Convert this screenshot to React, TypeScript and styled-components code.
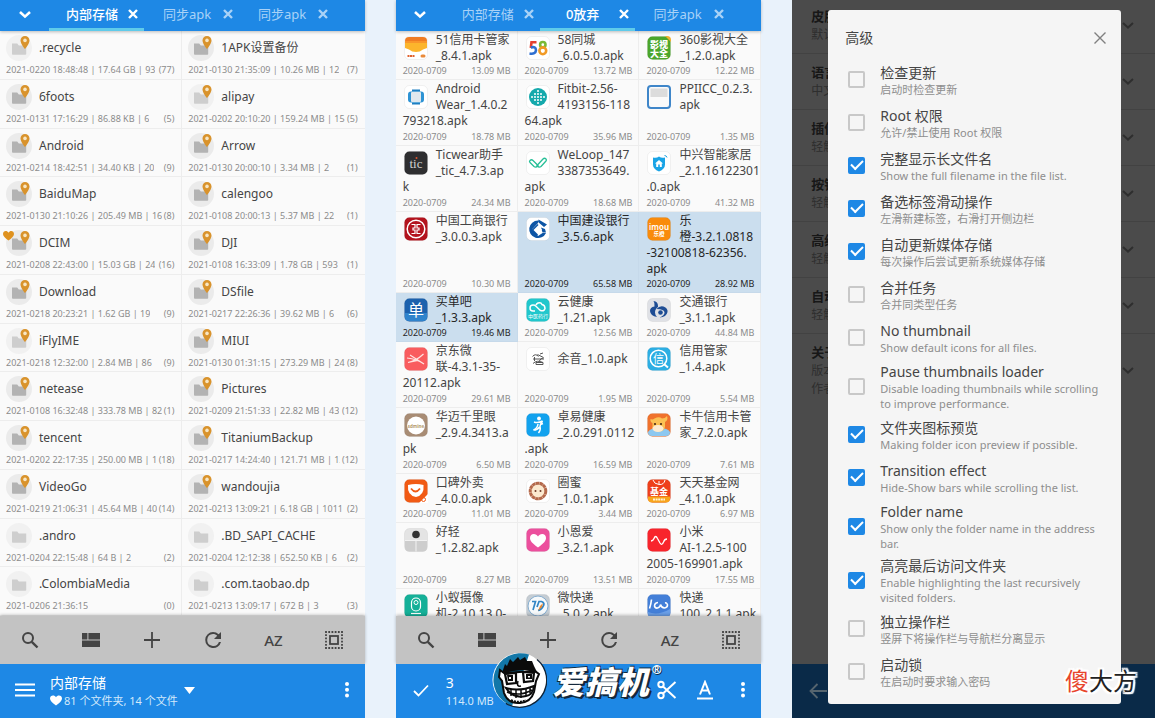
import React from "react";
import styled, { createGlobalStyle, css } from "styled-components";

const Global = createGlobalStyle`
  *, *::before, *::after { box-sizing: border-box; }
  body {
    margin: 0;
    background: #e9f2fb;
    font-family: "Noto Sans", "Noto Sans CJK SC", sans-serif;
    color: #454545;
  }
  button { font: inherit; color: inherit; background: none; border: 0; padding: 0; cursor: pointer; }
  ul { list-style: none; margin: 0; padding: 0; }
  svg { display: block; flex: none; }
`;

const Screens = styled.main`
  display: grid;
  grid-template-columns: minmax(0, 365fr) minmax(0, 366fr) minmax(0, 363fr);
  column-gap: 31px;
  height: 100vh;
  overflow: hidden;
`;

const Phone = styled.section`
  position: relative;
  display: flex;
  flex-direction: column;
  min-width: 0;
  min-height: 0;
  background: #fafafa;
`;

/* ---------- tabs ---------- */

const TabBar = styled.nav`
  display: flex;
  flex: none;
  height: 31px;
  background: #1e88e5;
  color: #fff;
  box-shadow: 0 1px 3px rgba(0, 0, 0, 0.25);
  z-index: 1;
`;

const TabMenuButton = styled.button`
  display: flex;
  align-items: center;
  justify-content: center;
  width: 49px;
  padding-bottom: 2px;
`;

const Tab = styled.div<{ $active?: boolean }>`
  display: flex;
  align-items: center;
  width: 95px;
  padding: 0 5px 0 8px;
  border-bottom: 3px solid ${(p) => (p.$active ? "#5fcbea" : "transparent")};
  color: ${(p) => (p.$active ? "#fff" : "#a9d2f7")};
  font-weight: ${(p) => (p.$active ? 500 : 400)};
`;

const TabLabel = styled.button`
  flex: 1;
  font-size: 13px;
  line-height: 20px;
  white-space: nowrap;
`;

const TabClose = styled.button`
  width: 12px;
  height: 12px;
`;

/* ---------- folder list ---------- */

const FolderGrid = styled.ul`
  flex: 1;
  min-height: 0;
  display: grid;
  grid-template-columns: repeat(2, minmax(0, 1fr));
  grid-auto-rows: minmax(0, 1fr);
`;

const FolderCell = styled.li`
  display: flex;
  flex-direction: column;
  padding: 4px 7px 0 6px;
  border-bottom: 1px solid #ededed;
  overflow: hidden;
  &:nth-child(odd) { border-right: 1px solid #ededed; }
`;

const FolderTop = styled.div`
  display: flex;
  align-items: center;
  gap: 7px;
`;

const FolderName = styled.span`
  font-size: 12px;
  line-height: 24px;
  white-space: nowrap;
`;

const FolderMeta = styled.div`
  display: flex;
  justify-content: space-between;
  gap: 2px;
  font-size: 9px;
  line-height: 17px;
  color: #8c8c8c;
  white-space: nowrap;
`;

const Clip = styled.span`
  overflow: hidden;
`;

/* ---------- apk list ---------- */

const ApkList = styled.div`
  flex: 1;
  min-height: 0;
  overflow: hidden;
`;

const rowHeights: Record<number, number> = { 2: 49, 3: 66, 4: 81 };

const ApkRow = styled.ul<{ $lines: number }>`
  display: grid;
  grid-template-columns: repeat(3, minmax(0, 1fr));
  min-height: ${(p) => rowHeights[p.$lines]}px;
`;

const ApkCell = styled.li<{ $selected?: boolean }>`
  display: flex;
  flex-direction: column;
  justify-content: space-between;
  padding: 1px 6px 1px 7px;
  border: solid #ededed;
  border-width: 0 1px 1px 0;
  color: #454545;
  ${(p) =>
    p.$selected &&
    css`
      background: #cbdeee;
      border-color: #c6d9ea;
      color: #262626;
    `}
`;

const ApkName = styled.div`
  font-size: 12px;
  line-height: 16px;
  white-space: pre;
`;

const ApkHead = styled.div`
  display: flex;
  align-items: center;
  gap: 8px;
  min-height: 32px;
  padding-left: 1px;
`;

const ApkMeta = styled.div<{ $selected?: boolean }>`
  display: flex;
  justify-content: space-between;
  font-size: 9px;
  line-height: 14px;
  color: ${(p) => (p.$selected ? "#262626" : "#8c8c8c")};
`;

/* ---------- bars ---------- */

const ToolBar = styled.div`
  display: grid;
  grid-template-columns: repeat(6, 1fr);
  flex: none;
  height: 48px;
  background: #c3c3c3;
  color: #444;
  box-shadow: 0 -1px 3px rgba(0, 0, 0, 0.25);
  z-index: 1;
`;

const ToolButton = styled.button`
  display: flex;
  align-items: center;
  justify-content: center;
  font-size: 15px;
  font-weight: 500;
`;

const AddressBar = styled.footer`
  position: relative;
  display: flex;
  align-items: center;
  flex: none;
  height: 54px;
  padding: 0 6px 2px 13px;
  background: #1e88e5;
  color: #fff;
  z-index: 1;
`;

const BarButton = styled.button`
  display: flex;
  align-items: center;
  justify-content: center;
  width: 24px;
  height: 40px;
`;

const Location = styled.div`
  display: flex;
  flex-direction: column;
  padding-left: 13px;
`;

const LocationTitle = styled.span`
  font-size: 14px;
  line-height: 20px;
`;

const LocationSub = styled.span`
  display: flex;
  align-items: center;
  gap: 2px;
  font-size: 11px;
  line-height: 15px;
  color: #d3e8fb;
`;

const Spacer = styled.span`
  flex: 1;
`;

const ActionGroup = styled.div`
  display: flex;
  gap: 14px;
`;

const Brand = styled.div`
  position: absolute;
  left: 96px;
  top: -12px;
  display: flex;
  align-items: center;
  gap: 6px;
`;

const BrandName = styled.strong`
  font-family: "Noto Sans CJK SC", sans-serif;
  font-size: 32px;
  line-height: 40px;
  font-weight: 900;
  font-style: italic;
  color: #fff;
  text-shadow: 2px 2px 0 #14283c, 1px -1px 0 #14283c, -1px 1px 0 #14283c;
`;

const BrandMark = styled.span`
  align-self: flex-start;
  margin: 8px 0 0 -3px;
  font-size: 12px;
  line-height: 20px;
  font-weight: 700;
  text-shadow: 1px 1px 0 #14283c;
`;

/* ---------- settings ---------- */

const SettingsPhone = styled(Phone)`
  background: #4b4b4b;
`;

const SettingsList = styled.ul`
  flex: 1;
  min-height: 0;
`;

const SettingsItem = styled.li`
  display: flex;
  align-items: center;
  justify-content: space-between;
  padding: 9px 21px 9px 19px;
  border-bottom: 1px solid #424242;
  color: #2e2e2e;
  &:first-child { padding-top: 7px; }
  &:last-child { border-bottom: 0; }
`;

const SettingsTitle = styled.div`
  font-size: 13px;
  line-height: 19px;
  font-weight: 600;
  color: #171717;
`;

const SettingsSub = styled.div`
  font-size: 12px;
  line-height: 18px;
  white-space: pre-line;
`;

const BackBar = styled.footer`
  display: flex;
  align-items: center;
  flex: none;
  height: 54px;
  padding-left: 14px;
  background: #0a2a48;
  color: #56656f;
`;

const Dialog = styled.div`
  position: absolute;
  top: 10px;
  left: 36px;
  right: 34px;
  padding-bottom: 11px;
  background: #f5f5f5;
  border-radius: 3px;
  z-index: 2;
`;

const DialogHeader = styled.header`
  display: flex;
  align-items: center;
  justify-content: space-between;
  height: 48px;
  padding: 7px 15px 0 17px;
`;

const DialogTitle = styled.h2`
  margin: 0;
  font-size: 14px;
  line-height: 20px;
  font-weight: 400;
`;

const Option = styled.label`
  display: flex;
  align-items: center;
  gap: 15px;
  min-height: 43px;
  padding: 0 14px 0 20px;
  cursor: pointer;
`;

const OptionText = styled.span`
  display: flex;
  flex-direction: column;
  padding: 4px 0 2px;
`;

const OptionTitle = styled.span`
  font-size: 14px;
  line-height: 18px;
`;

const OptionSub = styled.span`
  font-size: 11px;
  line-height: 15px;
  color: #8e8e8e;
`;

const CheckBox = styled.input`
  appearance: none;
  display: grid;
  place-items: center;
  flex: none;
  width: 17px;
  height: 17px;
  margin: 0;
  border: 2px solid #c8c8c8;
  border-radius: 2px;
  &:checked {
    background: #1e88e5;
    border-color: #1e88e5;
  }
  &:checked::after {
    content: "";
    width: 12px;
    height: 7px;
    margin-top: -4px;
    border: solid #fff;
    border-width: 0 0 2px 2px;
    transform: rotate(-45deg);
  }
`;

const Watermark = styled.div`
  position: absolute;
  right: 18px;
  bottom: 20px;
  font-family: "Noto Sans CJK SC", sans-serif;
  font-size: 24px;
  line-height: 36px;
  color: #222;
  text-shadow: 2px 0 1px #fff, -2px 0 1px #fff, 0 2px 1px #fff, 0 -2px 1px #fff,
    2px 2px 1px #fff, -2px 2px 1px #fff, 2px -2px 1px #fff, -2px -2px 1px #fff;
  z-index: 3;
`;

const WatermarkRed = styled.span`
  color: #e8452c;
`;

/* ---------- small drawings ---------- */

const Chevron = ({ size = 12, width = 2.6 }: { size?: number; width?: number }) => (
  <svg width={size} height={size} viewBox="0 0 12 12" fill="none" stroke="currentColor" strokeWidth={width}>
    <path d="M1 3l5 4.6L11 3" />
  </svg>
);

const Cross = ({ size = 12, width = 2.4 }: { size?: number; width?: number }) => (
  <svg width={size} height={size} viewBox="0 0 12 12" fill="none" stroke="currentColor" strokeWidth={width}>
    <path d="M2 2l8 8M10 2l-8 8" />
  </svg>
);

const Dots = () => (
  <svg width="6" height="18" viewBox="0 0 6 18" fill="currentColor">
    <circle cx="3" cy="3" r="2" />
    <circle cx="3" cy="8.7" r="2" />
    <circle cx="3" cy="14.4" r="2" />
  </svg>
);

const FolderIcon = ({ faint, pin, heart }: { faint?: boolean; pin?: boolean; heart?: boolean }) => (
  <svg width="26" height="26" viewBox="0 0 26 26" overflow="visible">
    <circle cx="13" cy="13" r="13" fill={faint ? "#f1f1f1" : "#ebebeb"} />
    <path d="M6 8.6h5.2l1.6 1.8h7.4V19a.8.8 0 01-.8.8H6.8A.8.8 0 016 19z" fill={faint ? "#cecece" : "#b3b3b3"} />
    {pin && (
      <g>
        <path d="M19 1a4.5 4.5 0 00-4.5 4.5C14.5 9 19 14 19 14S23.500 9 23.500 5.500A4.500 4.500 0 0019 1z" fill="#d9932c" />
        <circle cx="19" cy="5.400" r="1.800" fill="#f7e6c4" />
      </g>
    )}
    {heart && (
      <path d="M2.500 10.500C-1 7.800-3 6-3 3.900-3 2.200-1.700 1-.3 1c1.200 0 2.200.7 2.800 1.700C3.100 1.700 4.100 1 5.300 1 6.700 1 8 2.200 8 3.900c0 2.100-2 3.900-5.500 6.600z" fill="#df921f" />
    )}
  </svg>
);

const Tile = ({ fill, children }: { fill: string; children?: React.ReactNode }) => (
  <svg width="24" height="24" viewBox="0 0 24 24" fontFamily='"Noto Sans", "Noto Sans CJK SC", sans-serif'>
    <rect x="0.500" y="0.500" width="23" height="23" rx="5" fill={fill} stroke="rgba(0,0,0,0.05)" />
    {children}
  </svg>
);

const icons: Record<string, React.ReactNode> = {
  card51: (
    <Tile fill="#fff">
      <path d="M1 5q0-4 4-4h14q4 0 4 4v3H1z" fill="#f07c22" />
      <path d="M1 7h22v5l-4 1.500q-3 2.500-7 2.500t-7-2.500L1 12z" fill="#fcb52c" />
      <path d="M1 6h22" stroke="#f9962a" strokeWidth="2" />
      <path d="M3.500 20h7" stroke="#e0622e" strokeWidth="2" strokeDasharray="2 .5" />
      <rect x="16.500" y="18.500" width="5" height="3" rx="1.500" fill="#e98a3a" />
    </Tile>
  ),
  city58: (
    <Tile fill="#fff">
      <g fill="none" strokeWidth="2.600">
        <path d="M10.500 6.300H5.500L4.800 12" stroke="#e5402f" />
        <path d="M4.800 11.500q5-1.500 5.200 2.700-.3 4.300-6.500 3.300" stroke="#2f6fd0" />
        <circle cx="16.800" cy="8.700" r="2.700" stroke="#7ab936" />
        <circle cx="16.800" cy="14.800" r="3.400" stroke="#f19a25" />
      </g>
    </Tile>
  ),
  film360: (
    <Tile fill="#4ba62b">
      <path d="M18 0h2q4 0 4 4v2z" fill="#f0b030" />
      <text x="12" y="11.500" fontSize="9" fontWeight="900" fill="#fff" textAnchor="middle">影视</text>
      <text x="12" y="20.500" fontSize="9" fontWeight="900" fill="#fff" textAnchor="middle">大全</text>
    </Tile>
  ),
  wear: (
    <Tile fill="#fff">
      <path d="M8 4.500h8v2H8zM8 17.500h8v2H8z" fill="#1d7fc2" />
      <rect x="4" y="6.500" width="16" height="11" rx="3" fill="#2d93d4" />
      <rect x="7" y="7" width="10" height="10" rx="1" fill="#dfe8ee" />
    </Tile>
  ),
  fitbit: (
    <Tile fill="#fff">
      <circle cx="12" cy="12" r="9" fill="#15a9ac" />
      <g fill="#fff">
        {[[12, 6], [9, 9], [12, 9], [15, 9], [6, 12], [9, 12], [12, 12], [15, 12], [18, 12], [9, 15], [12, 15], [15, 15], [12, 18]].map(([x, y]) => (
          <circle key={`${x}-${y}`} cx={x} cy={y} r="1" />
        ))}
      </g>
    </Tile>
  ),
  ppiicc: (
    <svg width="24" height="24" viewBox="0 0 24 24">
      <rect x="1" y="1" width="22" height="22" rx="3" fill="#fafafa" stroke="#3f86c9" strokeWidth="2" />
      <path d="M3.500 3.500h17V12h-17z" fill="#dcdcdc" />
    </svg>
  ),
  tic: (
    <Tile fill="#2e2e30">
      <text x="12" y="16.500" fontSize="13" fontFamily='"Liberation Serif", serif' fill="#d0d0d0" textAnchor="middle">tic</text>
      <circle cx="12.500" cy="7" r="1" fill="#e0542d" />
    </Tile>
  ),
  weloop: (
    <Tile fill="#fff">
      <g fill="none" stroke="#27bf97" strokeWidth="1.300" strokeLinejoin="round">
        <path d="M4 9.500q1.500-1.500 3 0l5 5q-2 2.500-4 1l-4-4q-1-1 0-2z" />
        <path d="M20 8q-1.500-1.500-3 0l-6 6.500q2 2.500 4 1l5-5.500q1-1 0-2z" />
      </g>
    </Tile>
  ),
  zte: (
    <Tile fill="#fff">
      <path d="M6 6.500q3.500 1 6-1 2.500 2 6 1v7q0 4.500-6 7-6-2.500-6-7z" fill="#1aa4e6" />
      <path d="M8 12.500l4-3.500 4 3.500h-1.200V16h-2v-2.500h-1.600V16h-2v-3.500z" fill="#fff" />
      <path d="M17.500 4.500q2 0 2.500 2" stroke="#1aa4e6" fill="none" />
    </Tile>
  ),
  icbc: (
    <Tile fill="#b3131d">
      <circle cx="12" cy="12" r="8.800" fill="none" stroke="#fff" strokeWidth="1.500" />
      <path d="M7.500 7.500h3.500v3.500h-2v2h2v3.500H7.500M16.500 7.500H13v3.500h2v2h-2v3.500h3.500" fill="none" stroke="#fff" strokeWidth="1.200" />
    </Tile>
  ),
  ccb: (
    <Tile fill="#fff">
      <path d="M12 3.500a8.800 8.800 0 108 12.500h-3.500L12 19l-6-6.500L12 6z" fill="#0d55a5" />
      <path d="M12.500 2.500l8.500 5-3 2.500-6-5zM15 10.500l4 1.500 1 3.500h-3.500z" fill="#0d55a5" />
      <path d="M11.500 8l4.500 4.500-4.500 4.500L7 12.500z" fill="#fff" />
      <path d="M6 12.500L11.500 7l1 1-5 5zM6.500 12l5.500 5.500-1 1.500-5.500-6z" fill="#0d55a5" />
    </Tile>
  ),
  imou: (
    <Tile fill="#f98b0b">
      <text x="12" y="12.500" fontSize="8" fontWeight="600" fill="#fff" textAnchor="middle">imou</text>
      <text x="12" y="19" fontSize="5.500" fontWeight="700" fill="#fff" textAnchor="middle">乐橙</text>
    </Tile>
  ),
  maidan: (
    <Tile fill="#1c61ad">
      <path d="M1 15h22v4q0 4-4 4H5q-4 0-4-4z" fill="#2f83cc" />
      <text x="12" y="18" fontSize="16" fill="#fff" textAnchor="middle">单</text>
    </Tile>
  ),
  cloud: (
    <Tile fill="#21c7cc">
      <path d="M9 13H7a3 3 0 010-6q1.800 0 3 1.200l4 4Q18 14 19 10.500 19 7 16 6.500q-1-2.500-4-1.500-1.500.8-2 2" fill="none" stroke="#fff" strokeWidth="1.500" />
      <text x="12" y="20" fontSize="5" fill="#fff" textAnchor="middle">中医药行</text>
    </Tile>
  ),
  bocom: (
    <Tile fill="#dfe1e6">
      <path d="M6.500 3Q11 3.500 11 8v1Q8 11 8 14.500q0 2.500 2 4.500-6.500-1-7-6Q3 9 7.500 8.500 8 5 6.500 3z" fill="#1d4c94" />
      <path d="M9.500 11q3-3.500 7-2.500 4.500 1.500 4 5.500-1 5-8 5.500 5-2 5-5 0-3.500-8-3.500z" fill="#1d4c94" />
      <circle cx="13.500" cy="14.500" r="2.300" fill="#1d4c94" />
    </Tile>
  ),
  jingdong: (
    <Tile fill="#f95c5e">
      <path d="M3 11q10 1 17 6L6 8M19.500 7Q12 14 4 15.500l10-2" fill="none" stroke="#ffe3e0" strokeWidth="1.200" />
    </Tile>
  ),
  yuyin: (
    <Tile fill="#fff">
      <g fill="none" stroke="#555" strokeWidth="1">
        <path d="M6.500 9.500q3-3.500 6 0M7 12h11M8.500 10v4M11.500 7.500l6 3M13 14.500q2-4 4.500-3.500" />
        <path d="M7 16.500q4-4 10-1M10 17.500h7v-2h-7zM14 7l3-1" />
      </g>
    </Tile>
  ),
  xin: (
    <Tile fill="#2caee3">
      <circle cx="11.500" cy="11.500" r="8.300" fill="none" stroke="#fff" strokeWidth="1.500" />
      <path d="M17.500 17.500l3.500 3" stroke="#fff" strokeWidth="2" />
      <text x="11.500" y="15.800" fontSize="11" fill="#fff" textAnchor="middle">信</text>
    </Tile>
  ),
  huamai: (
    <Tile fill="#a88c74">
      <circle cx="12" cy="12.500" r="9" fill="#fff" />
      <text x="12" y="14.500" fontSize="4.500" fontWeight="700" fill="#b59c6e" textAnchor="middle">sdmine</text>
    </Tile>
  ),
  zhuoyi: (
    <Tile fill="#12a2ee">
      <circle cx="13" cy="5.500" r="1.900" fill="#fff" />
      <path d="M8 9q4 1.500 8.500-1-2.500 3.500-2.500 5.500 1 3.500-1.500 6.500M12 11q-.5 4-4.500 6 4 0 6-3M14.500 11.500l2.500-1" fill="none" stroke="#fff" strokeWidth="1.500" />
    </Tile>
  ),
  kaniu: (
    <Tile fill="#f0722c">
      <path d="M1 19q2-4 11-4t11 4q0 4-4 4H5q-4 0-4-4z" fill="#8cc8f0" />
      <path d="M3.500 6q2 1 4-.5Q12 3 15 5.500q3 0 5-2.500 1.500 4-2 6v5q-1 4.500-6 4.500T5.500 15v-5Q3 9 3.500 6z" fill="#fbc154" />
      <ellipse cx="11" cy="15.500" rx="5.500" ry="3.500" fill="#fdebd0" />
      <circle cx="8" cy="11" r="1.100" fill="#4a2a16" />
      <circle cx="14" cy="11" r="1.100" fill="#4a2a16" />
    </Tile>
  ),
  koubei: (
    <Tile fill="#f15a14">
      <path d="M4 6q8-2 15.500 0 1 10-7.500 12Q3 16.500 4 6z" fill="#fff" />
      <path d="M7 9.500q4.500 6 9 0" stroke="#f15a14" strokeWidth="1.800" fill="none" />
      <path d="M15 24l9-9v9z" fill="#fff" />
      <circle cx="19.500" cy="20.500" r="2" fill="none" stroke="#f15a14" />
    </Tile>
  ),
  quanmi: (
    <Tile fill="#fff">
      <circle cx="12" cy="12" r="7.800" fill="#fbe9cf" stroke="#b4694b" strokeWidth="3" strokeDasharray="3.500 .3" />
      <circle cx="9.500" cy="12" r="1" fill="#6d3a2a" />
      <circle cx="14.500" cy="12" r="1" fill="#6d3a2a" />
    </Tile>
  ),
  fund: (
    <Tile fill="#ee3f1a">
      <path d="M1 17.500h22v2q0 4-4 4H5q-4 0-4-4z" fill="#f8a51c" />
      <path d="M6 1q1 4 6 4.500T18 1M12 2v3" stroke="#fff" fill="none" />
      <text x="12" y="15.800" fontSize="9" fontWeight="700" fill="#fff" textAnchor="middle">基金</text>
      <path d="M6 20.500h12" stroke="#fff3d8" strokeWidth="2" strokeDasharray="2 .6" />
    </Tile>
  ),
  haoqing: (
    <Tile fill="#e4e4e4">
      <path d="M1 12.500h22v7q0 4-4 4H5q-4 0-4-4z" fill="#cdcdcd" />
      <path d="M12 10v13.500M1 12.500h22" stroke="#f2f2f2" />
      <circle cx="12" cy="6.500" r="3.800" fill="#333" />
    </Tile>
  ),
  love: (
    <Tile fill="#ec4f9d">
      <path d="M12 19.500C6 15 4 12.700 4 9.900 4 7.500 5.700 6 7.800 6c1.800 0 3.300 1 4.200 2.600C12.900 7 14.400 6 16.200 6 18.300 6 20 7.500 20 9.900c0 2.800-2 5.100-8 9.600z" fill="#fff" />
    </Tile>
  ),
  xiaomiAi: (
    <Tile fill="#f8242c">
      <path d="M4 13q2 0 3-2.500 1.500-4 3.500 0l2.500 4.500q2 3 3.500-1Q17.500 11 20 11" fill="none" stroke="#fff" strokeWidth="1.300" />
    </Tile>
  ),
  xiaoyi: (
    <Tile fill="#15b098">
      <rect x="7.500" y="4" width="9" height="13" rx="4.500" fill="none" stroke="#fff" strokeWidth="1.200" />
      <circle cx="12" cy="8.500" r="2" fill="none" stroke="#fff" />
      <path d="M7 19.500h10" stroke="#fff" strokeWidth="1.200" />
    </Tile>
  ),
  weikuaidi: (
    <Tile fill="#c4ccd3">
      <circle cx="12" cy="12" r="10" fill="#f6f9fb" stroke="#86aed0" />
      <path d="M6 7.500h3.500L7 16M11 13l2-5.500h2.500q4 1.500 1.500 5-2 3.500-5 4" fill="none" stroke="#3185c5" strokeWidth="1.700" />
      <path d="M12 17l2-5 3-3-1 4z" fill="#ee8a2e" />
    </Tile>
  ),
  kuaidi100: (
    <Tile fill="#437fd8">
      <path d="M1 18q10 4 22-3v4q0 4.500-4 4.500H5q-4 0-4-4z" fill="#6a9fe8" />
      <g fill="none" stroke="#fff" strokeWidth="1.600">
        <path d="M4.500 5.500Q4 10.500 2.500 14.500" />
        <path d="M11 8.500q-3.500.5-3.500 3.500.5 2.500 3 2 3-1 3-3.500 1 3.500 4 3.500 3-.500 3-3-.5-2.500-2.500-2" />
      </g>
    </Tile>
  ),
};

/* ---------- data ---------- */

type Folder = { name: string; meta: string; count: number; faint?: boolean; pin?: boolean; heart?: boolean };

const folders: Folder[] = [
  { name: ".recycle", meta: "2021-0220 18:48:48 | 17.64 GB | 93", count: 77, pin: true, faint: true },
  { name: "1APK设置备份", meta: "2021-0130 21:35:09 | 10.26 MB | 12", count: 7, pin: true },
  { name: "6foots", meta: "2021-0131 17:16:29 | 86.88 KB | 6", count: 5, pin: true },
  { name: "alipay", meta: "2021-0202 20:10:20 | 159.24 MB | 15", count: 5, pin: true, faint: true },
  { name: "Android", meta: "2021-0214 18:42:51 | 34.40 KB | 20", count: 9, pin: true },
  { name: "Arrow", meta: "2021-0130 20:00:10 | 3.34 MB | 2", count: 1, pin: true },
  { name: "BaiduMap", meta: "2021-0130 21:10:26 | 205.49 MB | 16", count: 8, pin: true },
  { name: "calengoo", meta: "2021-0108 20:00:13 | 5.37 MB | 22", count: 1, pin: true },
  { name: "DCIM", meta: "2021-0208 22:43:00 | 15.03 GB | 24", count: 16, pin: true, heart: true },
  { name: "DJI", meta: "2021-0108 16:33:09 | 1.78 GB | 593", count: 1, pin: true },
  { name: "Download", meta: "2021-0218 20:23:21 | 1.62 GB | 19", count: 9, pin: true },
  { name: "DSfile", meta: "2021-0217 22:26:36 | 39.62 MB | 6", count: 6, pin: true },
  { name: "iFlyIME", meta: "2021-0218 12:32:00 | 2.84 MB | 86", count: 9, pin: true, faint: true },
  { name: "MIUI", meta: "2021-0130 01:31:15 | 273.29 MB | 24", count: 8, pin: true },
  { name: "netease", meta: "2021-0108 16:32:48 | 333.78 MB | 82", count: 1, pin: true },
  { name: "Pictures", meta: "2021-0209 21:51:33 | 22.82 MB | 43", count: 12, pin: true },
  { name: "tencent", meta: "2021-0202 22:17:35 | 250.00 MB | 1", count: 18, pin: true },
  { name: "TitaniumBackup", meta: "2021-0217 14:24:40 | 121.71 MB | 12", count: 12, pin: true },
  { name: "VideoGo", meta: "2021-0219 21:06:31 | 45.64 MB | 40", count: 14, pin: true },
  { name: "wandoujia", meta: "2021-0213 13:09:21 | 6.18 GB | 1011", count: 2, pin: true },
  { name: ".andro", meta: "2021-0204 22:15:48 | 64 B | 2", count: 2, faint: true },
  { name: ".BD_SAPI_CACHE", meta: "2021-0204 12:12:38 | 652.50 KB | 6", count: 2, faint: true },
  { name: ".ColombiaMedia", meta: "2021-0206 21:36:15", count: 0, faint: true },
  { name: ".com.taobao.dp", meta: "2021-0213 13:09:17 | 672 B | 3", count: 3, faint: true },
];

type Apk = { icon: string; name: string[]; size: string; selected?: boolean };

const apkRows: Apk[][] = [
  [
    { icon: "card51", name: ["51信用卡管家", "_8.4.1.apk"], size: "13.09 MB" },
    { icon: "city58", name: ["58同城", "_6.0.5.0.apk"], size: "13.72 MB" },
    { icon: "film360", name: ["360影视大全", "_1.2.0.apk"], size: "12.22 MB" },
  ],
  [
    { icon: "wear", name: ["Android", "Wear_1.4.0.2", "793218.apk"], size: "18.78 MB" },
    { icon: "fitbit", name: ["Fitbit-2.56-", "4193156-118", "64.apk"], size: "35.96 MB" },
    { icon: "ppiicc", name: ["PPIICC_0.2.3.", "apk"], size: "1.35 MB" },
  ],
  [
    { icon: "tic", name: ["Ticwear助手", "_tic_4.7.3.ap", "k"], size: "24.34 MB" },
    { icon: "weloop", name: ["WeLoop_147", "3387353649.", "apk"], size: "18.68 MB" },
    { icon: "zte", name: ["中兴智能家居", "_2.1.16122301", ".0.apk"], size: "41.32 MB" },
  ],
  [
    { icon: "icbc", name: ["中国工商银行", "_3.0.0.3.apk"], size: "10.30 MB" },
    { icon: "ccb", name: ["中国建设银行", "_3.5.6.apk"], size: "65.58 MB", selected: true },
    { icon: "imou", name: ["乐", "橙-3.2.1.0818", "-32100818-62356.", "apk"], size: "28.92 MB", selected: true },
  ],
  [
    { icon: "maidan", name: ["买单吧", "_1.3.3.apk"], size: "19.46 MB", selected: true },
    { icon: "cloud", name: ["云健康", "_1.21.apk"], size: "12.56 MB" },
    { icon: "bocom", name: ["交通银行", "_3.1.1.apk"], size: "44.84 MB" },
  ],
  [
    { icon: "jingdong", name: ["京东微", "联-4.3.1-35-", "20112.apk"], size: "29.61 MB" },
    { icon: "yuyin", name: ["余音_1.0.apk"], size: "1.95 MB" },
    { icon: "xin", name: ["信用管家", "_1.4.apk"], size: "5.54 MB" },
  ],
  [
    { icon: "huamai", name: ["华迈千里眼", "_2.9.4.3413.a", "pk"], size: "6.50 MB" },
    { icon: "zhuoyi", name: ["卓易健康", "_2.0.291.0112", ".apk"], size: "16.59 MB" },
    { icon: "kaniu", name: ["卡牛信用卡管", "家_7.2.0.apk"], size: "7.61 MB" },
  ],
  [
    { icon: "koubei", name: ["口碑外卖", "_4.0.0.apk"], size: "11.01 MB" },
    { icon: "quanmi", name: ["圈蜜", "_1.0.1.apk"], size: "3.44 MB" },
    { icon: "fund", name: ["天天基金网", "_4.1.0.apk"], size: "6.97 MB" },
  ],
  [
    { icon: "haoqing", name: ["好轻", "_1.2.82.apk"], size: "8.27 MB" },
    { icon: "love", name: ["小恩爱", "_3.2.1.apk"], size: "13.51 MB" },
    { icon: "xiaomiAi", name: ["小米", "AI-1.2.5-100", "2005-169901.apk"], size: "17.55 MB" },
  ],
  [
    { icon: "xiaoyi", name: ["小蚁摄像", "机-2.10.13.0-"], size: "" },
    { icon: "weikuaidi", name: ["微快递", "_5.0.2.apk"], size: "" },
    { icon: "kuaidi100", name: ["快递", "100_2.1.1.apk"], size: "" },
  ],
];

const options: [string, string, boolean][] = [
  ["检查更新", "启动时检查更新", false],
  ["Root 权限", "允许/禁止使用 Root 权限", false],
  ["完整显示长文件名", "Show the full filename in the file list.", true],
  ["备选标签滑动操作", "左滑新建标签，右滑打开侧边栏", true],
  ["自动更新媒体存储", "每次操作后尝试更新系统媒体存储", true],
  ["合并任务", "合并同类型任务", false],
  ["No thumbnail", "Show default icons for all files.", false],
  ["Pause thumbnails loader", "Disable loading thumbnails while scrolling to improve performance.", false],
  ["文件夹图标预览", "Making folder icon preview if possible.", true],
  ["Transition effect", "Hide-Show bars while scrolling the list.", true],
  ["Folder name", "Show only the folder name in the address bar.", true],
  ["高亮最后访问文件夹", "Enable highlighting the last recursively visited folders.", true],
  ["独立操作栏", "竖屏下将操作栏与导航栏分离显示", false],
  ["启动锁", "在启动时要求输入密码", false],
];

const settings: [string, string][] = [
  ["皮肤", "默认"],
  ["语言", "中文"],
  ["插件", "轻触"],
  ["按钮", "轻触"],
  ["高级", "轻触"],
  ["自动", "轻触"],
  ["关于", "版本\n作者"],
];

/* ---------- parts ---------- */

const Tabs = ({ labels, active }: { labels: string[]; active: number }) => (
  <TabBar>
    <TabMenuButton aria-label="Tabs">
      <Chevron />
    </TabMenuButton>
    {labels.map((label, i) => (
      <Tab key={i} $active={i === active}>
        <TabLabel>{label}</TabLabel>
        <TabClose aria-label="Close">
          <Cross />
        </TabClose>
      </Tab>
    ))}
  </TabBar>
);

const Tools = () => (
  <ToolBar>
    <ToolButton aria-label="Search">
      <svg width="18" height="18" viewBox="0 0 18 18" fill="none" stroke="currentColor" strokeWidth="2">
        <circle cx="7" cy="7" r="5" />
        <path d="M10.800 10.800L16.500 16.500" strokeWidth="2.400" />
      </svg>
    </ToolButton>
    <ToolButton aria-label="View">
      <svg width="18" height="14" viewBox="0 0 18 14" fill="currentColor">
        <path d="M0 0h5.400v6.400H0zM6.400 0H18v6.400H6.400zM0 7.400h18V14H0z" />
      </svg>
    </ToolButton>
    <ToolButton aria-label="Add">
      <svg width="16" height="16" viewBox="0 0 16 16" stroke="currentColor" strokeWidth="1.800">
        <path d="M8 0v16M0 8h16" />
      </svg>
    </ToolButton>
    <ToolButton aria-label="Refresh">
      <svg width="16" height="16" viewBox="4 4 16 16" fill="currentColor">
        <path d="M17.650 6.350A7.960 7.960 0 0012 4a8 8 0 108 10h-2.090A6 6 0 1112 6c1.660 0 3.140.69 4.220 1.780L13 11h7V4l-2.350 2.350z" />
      </svg>
    </ToolButton>
    <ToolButton>AZ</ToolButton>
    <ToolButton aria-label="Select all">
      <svg width="18" height="18" viewBox="0 0 18 18" fill="none" stroke="currentColor">
        <rect x="1" y="1" width="16" height="16" strokeWidth="1.800" strokeDasharray="1.800 1.400" strokeDashoffset="0.900" />
        <rect x="5" y="5" width="8" height="8" strokeWidth="1.800" />
      </svg>
    </ToolButton>
  </ToolBar>
);

const Mascot = () => (
  <svg width="55" height="56" viewBox="0 0 55 56">
    <circle cx="27.500" cy="28" r="27" fill="#fff" />
    <path d="M37 2.600A27 27 0 1020 54z" fill="#1277a8" />
    <path d="M45 7.500A27 27 0 0114 51.500 27 27 0 0054 34 27 27 0 0045 7.500z" fill="none" stroke="#123" strokeWidth="1.200" />
    <path d="M12 21l-4-3-1 7 3 4 2 12q4 11 16 10 11-1 14-11l2-11 3-7-4-3z" fill="#fff" stroke="#0b0b0b" strokeWidth="2" />
    <path d="M10 21l3-9 2 2 3-7 3 3 5-5 2 3 5-3 2 4 5 0 2 5 4 8-4-2-9-2-12 1-8 2z" fill="#0b0b0b" />
    <g fill="none" stroke="#0b0b0b" strokeWidth="2.200">
      <path d="M13 22l11-1v10l-9 1z" />
      <path d="M31 20l11 1-1 8-9 1z" />
    </g>
    <path d="M15 23h6v6h-5zM34 22h6v5h-6z" fill="#0b0b0b" />
    <path d="M17 25h2v2h-2zM36 24h2v1.500h-2z" fill="#fff" />
    <path d="M26 29q-2 6 3 5" stroke="#0b0b0b" strokeWidth="1.500" fill="none" />
    <path d="M14 36q13 4 28-2-1 9-8 10-13 3-20-8z" fill="#fff" stroke="#0b0b0b" strokeWidth="2" />
    <path d="M15 40q12 5 25-2M19 37v7M24 38v8M29 38v8M34 37v7M38 36v5" stroke="#0b0b0b" strokeWidth="1.500" fill="none" />
    <path d="M19 48q8 3 15 0" stroke="#0b0b0b" strokeWidth="1.500" strokeDasharray="2 1" fill="none" />
  </svg>
);

const ApkItem = ({ apk }: { apk: Apk }) => (
  <ApkCell $selected={apk.selected}>
    <ApkName>
      <ApkHead>
        {icons[apk.icon]}
        <div>
          {apk.name.slice(0, 2).map((line) => (
            <div key={line}>{line}</div>
          ))}
        </div>
      </ApkHead>
      {apk.name.slice(2).map((line) => (
        <div key={line}>{line}</div>
      ))}
    </ApkName>
    {apk.size && (
      <ApkMeta $selected={apk.selected}>
        <span>2020-0709</span>
        <span>{apk.size}</span>
      </ApkMeta>
    )}
  </ApkCell>
);

export default function App() {
  return (
    <>
      <Global />
      <Screens>
        <Phone>
          <Tabs labels={["内部存储", "同步apk", "同步apk"]} active={0} />
          <FolderGrid>
            {folders.map((f) => (
              <FolderCell key={f.name}>
                <FolderTop>
                  <FolderIcon faint={f.faint} pin={f.pin} heart={f.heart} />
                  <FolderName>{f.name}</FolderName>
                </FolderTop>
                <FolderMeta>
                  <Clip>{f.meta}</Clip>
                  <span>({f.count})</span>
                </FolderMeta>
              </FolderCell>
            ))}
          </FolderGrid>
          <Tools />
          <AddressBar>
            <BarButton aria-label="Menu">
              <svg width="20" height="14" viewBox="0 0 20 14" stroke="currentColor" strokeWidth="2">
                <path d="M0 1.500h20M0 7h20M0 12.500h20" />
              </svg>
            </BarButton>
            <Location>
              <LocationTitle>内部存储</LocationTitle>
              <LocationSub>
                <svg width="12" height="11" viewBox="0 0 12 11" fill="#fff">
                  <path d="M6 10.500C2 7.500 0 5.700 0 3.500 0 1.700 1.400.5 3 .5c1.200 0 2.400.7 3 1.700C6.600 1.200 7.800.5 9 .5c1.600 0 3 1.200 3 3 0 2.200-2 4-6 7z" />
                </svg>
                81 个文件夹, 14 个文件
              </LocationSub>
            </Location>
            <BarButton aria-label="Locations">
              <svg width="11" height="7" viewBox="0 0 11 7" fill="currentColor">
                <path d="M0 0h11L5.500 7z" />
              </svg>
            </BarButton>
            <Spacer />
            <BarButton aria-label="More">
              <Dots />
            </BarButton>
          </AddressBar>
        </Phone>

        <Phone>
          <Tabs labels={["内部存储", "0放弃", "同步apk"]} active={1} />
          <ApkList>
            {apkRows.map((row, i) => (
              <ApkRow key={i} $lines={Math.max(...row.map((a) => a.name.length))}>
                {row.map((apk) => (
                  <ApkItem key={apk.icon} apk={apk} />
                ))}
              </ApkRow>
            ))}
          </ApkList>
          <Tools />
          <AddressBar>
            <BarButton aria-label="Done">
              <svg width="16" height="13" viewBox="0 0 16 13" fill="none" stroke="currentColor" strokeWidth="1.800">
                <path d="M1 7l4.500 4.500L15 1.500" />
              </svg>
            </BarButton>
            <Location>
              <LocationTitle>3</LocationTitle>
              <LocationSub>114.0 MB</LocationSub>
            </Location>
            <Spacer />
            <ActionGroup>
              <BarButton aria-label="Cut">
                <svg width="20" height="20" viewBox="0 0 20 20" fill="none" stroke="currentColor" strokeWidth="2">
                  <circle cx="4" cy="4.500" r="2.700" />
                  <circle cx="4" cy="15.500" r="2.700" />
                  <path d="M6 6.500L18.500 18M6 13.500L18.500 2" />
                </svg>
              </BarButton>
              <BarButton aria-label="Rename">
                <svg width="16" height="20" viewBox="0 0 16 20" fill="none" stroke="currentColor" strokeWidth="2">
                  <path d="M3 14.500L8 2l5 12.500M4.500 10.500h7" />
                  <path d="M0 18.500h16" />
                </svg>
              </BarButton>
              <BarButton aria-label="More">
                <Dots />
              </BarButton>
            </ActionGroup>
            <Brand>
              <Mascot />
              <BrandName>爱搞机</BrandName>
              <BrandMark>®</BrandMark>
            </Brand>
          </AddressBar>
        </Phone>

        <SettingsPhone>
          <SettingsList>
            {settings.map(([title, sub]) => (
              <SettingsItem key={title}>
                <div>
                  <SettingsTitle>{title}</SettingsTitle>
                  <SettingsSub>{sub}</SettingsSub>
                </div>
                <Chevron width={2} />
              </SettingsItem>
            ))}
          </SettingsList>
          <BackBar>
            <BarButton aria-label="Back">
              <svg width="18" height="16" viewBox="0 0 18 16" fill="none" stroke="currentColor" strokeWidth="1.800">
                <path d="M18 8H1.500M8.500 1l-7 7 7 7" />
              </svg>
            </BarButton>
          </BackBar>
          <Dialog role="dialog" aria-label="高级">
            <DialogHeader>
              <DialogTitle>高级</DialogTitle>
              <TabClose aria-label="Close">
                <svg width="12" height="12" viewBox="0 0 12 12" stroke="#808080" strokeWidth="1.400">
                  <path d="M0.500 0.500l11 11M11.500 0.500l-11 11" />
                </svg>
              </TabClose>
            </DialogHeader>
            {options.map(([title, sub, on]) => (
              <Option key={title}>
                <CheckBox type="checkbox" defaultChecked={on} />
                <OptionText>
                  <OptionTitle>{title}</OptionTitle>
                  <OptionSub>{sub}</OptionSub>
                </OptionText>
              </Option>
            ))}
          </Dialog>
          <Watermark>
            <WatermarkRed>傻</WatermarkRed>大方
          </Watermark>
        </SettingsPhone>
      </Screens>
    </>
  );
}
